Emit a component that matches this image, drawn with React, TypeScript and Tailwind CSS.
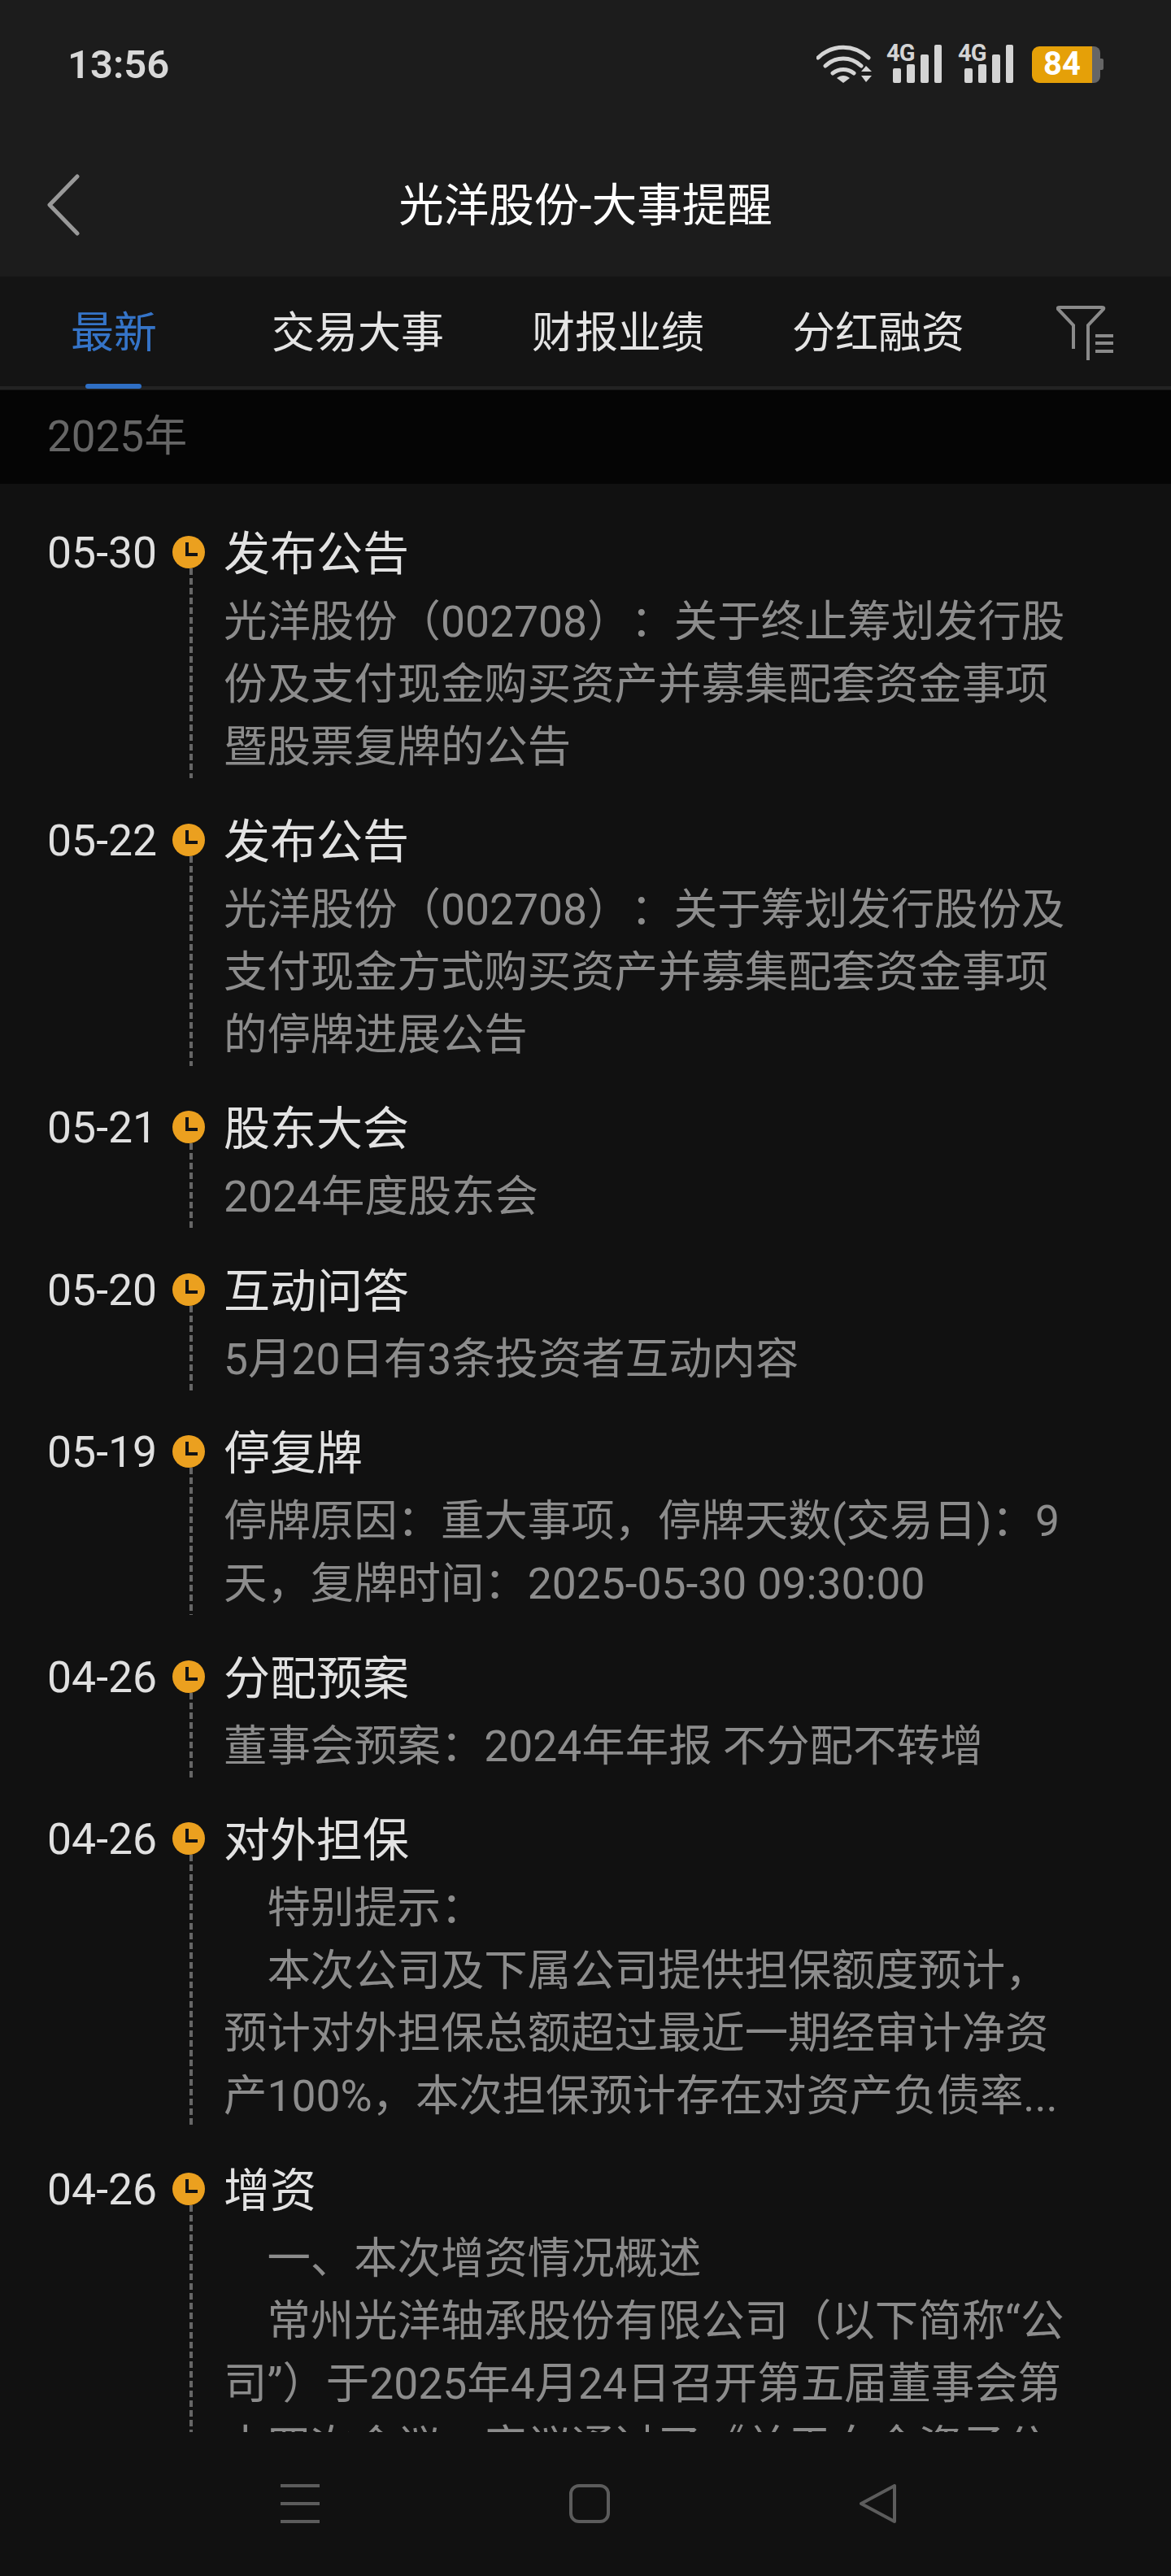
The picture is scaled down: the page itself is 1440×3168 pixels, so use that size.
const fontStack = { fontFamily: 'Roboto, "Noto Sans CJK SC", sans-serif' };

const events = [
  {
    date: '05-30',
    title: '发布公告',
    lines: ['光洋股份（002708）：关于终止筹划发行股', '份及支付现金购买资产并募集配套资金事项', '暨股票复牌的公告'],
  },
  {
    date: '05-22',
    title: '发布公告',
    lines: ['光洋股份（002708）：关于筹划发行股份及', '支付现金方式购买资产并募集配套资金事项', '的停牌进展公告'],
  },
  { date: '05-21', title: '股东大会', lines: ['2024年度股东会'] },
  { date: '05-20', title: '互动问答', lines: ['5月20日有3条投资者互动内容'] },
  {
    date: '05-19',
    title: '停复牌',
    lines: ['停牌原因：重大事项，停牌天数(交易日)：9', '天，复牌时间：2025-05-30 09:30:00'],
  },
  { date: '04-26', title: '分配预案', lines: ['董事会预案：2024年年报 不分配不转增'] },
  {
    date: '04-26',
    title: '对外担保',
    lines: ['　特别提示：', '　本次公司及下属公司提供担保额度预计，', '预计对外担保总额超过最近一期经审计净资', '产100%，本次担保预计存在对资产负债率...'],
  },
  {
    date: '04-26',
    title: '增资',
    lines: ['　一、本次增资情况概述', '　常州光洋轴承股份有限公司（以下简称“公', '司”）于2025年4月24日召开第五届董事会第', '十四次会议，审议通过了《关于向全资子公'],
  },
];

function Signal() {
  return (
    <div className="relative w-[68px] h-[48px]">
      <span className="absolute left-0 top-[-5px] text-[29px] leading-[30px] font-bold tracking-[-1px] text-[#d4d4d4]" style={{ fontFamily: 'Roboto, sans-serif' }}>
        4G
      </span>
      <svg width="68" height="48" viewBox="0 0 68 48" fill="#d4d4d4">
        <rect x="8" y="29" width="10" height="18" rx="2" />
        <rect x="25" y="24" width="10" height="23" rx="2" />
        <rect x="42" y="12" width="10" height="35" rx="2" />
        <rect x="59" y="0" width="9" height="47" rx="2" />
      </svg>
    </div>
  );
}

function Wifi() {
  return (
    <svg width="68" height="48" viewBox="0 0 68 48" fill="none" stroke="#d4d4d4" strokeWidth="5" strokeLinecap="round">
      <path d="M2 16 C20 -1 46 -1 64 16" />
      <path d="M11 26 C24 14 42 14 55 26" />
      <path d="M20 35 C28 29 38 29 46 35" />
      <path d="M33 47 L25 41 C30 37 36 37 41 41 Z" fill="#d4d4d4" stroke="none" />
      <path d="M61 26 L68 33 L55 33 Z" fill="#d4d4d4" stroke="none" />
      <path d="M55 38 L68 38 L61 46 Z" fill="#d4d4d4" stroke="none" />
    </svg>
  );
}

function Clock() {
  return (
    <svg width="40" height="40" viewBox="0 0 40 40" className="shrink-0">
      <circle cx="20" cy="20" r="20" fill="#eba01f" />
      <path d="M18 8 V23 H31" fill="none" stroke="#141414" strokeWidth="4" />
    </svg>
  );
}

export default function App() {
  return (
    <div className="w-[1440px] h-[3168px] flex flex-col overflow-hidden bg-[#111111] [text-spacing-trim:space-all]" style={fontStack}>
      {/* Status bar + title */}
      <div className="h-[340px] shrink-0 bg-[#1c1c1c] flex flex-col">
        <div className="h-[158px] flex items-center justify-between pl-[83px] pr-[83px]">
          <span className="text-[49px] font-semibold text-[#d8d8d8] leading-none">13:56</span>
          <div className="flex items-center">
            <Wifi />
            <div className="w-[18px]" />
            <Signal />
            <div className="w-[20px]" />
            <Signal />
            <div className="w-[23px]" />
            <div className="flex items-center">
              <div className="w-[74px] h-[45px] rounded-l-[9px] bg-[#e5a008] flex items-center justify-center text-[40px] font-bold text-white leading-none">
                84
              </div>
              <div className="w-[10px] h-[45px] rounded-r-[8px] bg-[#666666]" />
              <div className="w-[4px] h-[14px] rounded-r-[2px] bg-[#666666]" />
            </div>
          </div>
        </div>
        <div className="flex-1 flex items-center pl-[58px] pr-[98px] pt-[6px]">
          <svg width="40" height="76" viewBox="0 0 40 76" fill="none" stroke="#999999" strokeWidth="5" strokeLinecap="round" strokeLinejoin="round" className="shrink-0">
            <path d="M37 3 L3 38 L37 73" />
          </svg>
          <div className="flex-1 text-center text-[55.5px] leading-none text-white whitespace-nowrap pt-[4px]">光洋股份-大事提醒</div>
        </div>
      </div>

      {/* Tabs */}
      <div className="h-[140px] shrink-0 bg-[#141414] flex flex-col">
        <div className="flex-1 flex items-center pl-[87px] pr-[71px] pt-[8px]">
          <span className="w-[106px] text-[53px] leading-none text-[#3574c8] whitespace-nowrap">最新</span>
          <span className="ml-[141px] w-[212px] text-[53px] leading-none text-[#e4e4e4] whitespace-nowrap">交易大事</span>
          <span className="ml-[108px] w-[212px] text-[53px] leading-none text-[#e4e4e4] whitespace-nowrap">财报业绩</span>
          <span className="ml-[108px] w-[212px] text-[53px] leading-none text-[#e4e4e4] whitespace-nowrap">分红融资</span>
          <svg width="70" height="68" viewBox="0 0 70 68" fill="none" stroke="#8a8a8a" strokeWidth="4" className="ml-auto shrink-0">
            <path d="M21 53 V24 L2 4 Q1 2 4 2 H56 Q59 2 58 4 L39 24 V67" />
            <path d="M48 37 H70 M48 46 H70 M48 56 H70" />
          </svg>
        </div>
        <div className="h-[8px] relative">
          <div className="absolute left-0 right-0 top-[3px] h-[4px] bg-[#232323]" />
          <div className="absolute left-[105px] top-0 w-[69px] h-[6px] rounded-[3px] bg-[#2f6fc4]" />
        </div>
      </div>

      {/* Year band */}
      <div className="h-[115px] shrink-0 bg-[#050505] flex items-center pl-[58px] text-[53px] leading-none text-[#666666]">2025年</div>

      {/* Timeline */}
      <div className="h-[2396px] shrink-0 overflow-hidden pt-[43px] flex flex-col gap-[34.5px]">
        {events.map((item, i) => (
          <div key={i} className="flex shrink-0">
            <div className="w-[212px] shrink-0 pl-[58px] text-[53.5px] leading-[83px] text-[#e0e0e0]">{item.date}</div>
            <div className="w-[40px] shrink-0 pt-[21px] flex flex-col items-center">
              <Clock />
              <div className="flex-1 w-[4px] ml-[6px] bg-[repeating-linear-gradient(to_bottom,#666666_0_8px,transparent_8px_12px)]" />
            </div>
            <div className="ml-[23px] flex-1 min-w-0">
              <div className="text-[57px] leading-[88px] text-[#e2e2e2] whitespace-nowrap">{item.title}</div>
              {item.lines.map((line, j) => (
                <div key={j} className="text-[53.4px] leading-[77px] text-[#8c8c8c] whitespace-pre">
                  {line}
                </div>
              ))}
            </div>
          </div>
        ))}
      </div>

      {/* Navigation keys */}
      <div className="flex-1 flex items-center pl-[345px] gap-[307px] pb-[2px]">
        <svg width="48" height="48" viewBox="0 0 48 48" fill="#5c5c5c">
          <rect x="0" y="0" width="48" height="4" />
          <rect x="0" y="22" width="48" height="4" />
          <rect x="0" y="44" width="48" height="4" />
        </svg>
        <svg width="50" height="48" viewBox="0 0 50 48" fill="none" stroke="#5c5c5c" strokeWidth="4">
          <rect x="2" y="2" width="46" height="44" rx="10" />
        </svg>
        <svg width="45" height="48" viewBox="0 0 45 48" fill="none" stroke="#5c5c5c" strokeWidth="4" strokeLinejoin="round">
          <path d="M43 2 V46 L2 24 Z" />
        </svg>
      </div>
    </div>
  );
}
